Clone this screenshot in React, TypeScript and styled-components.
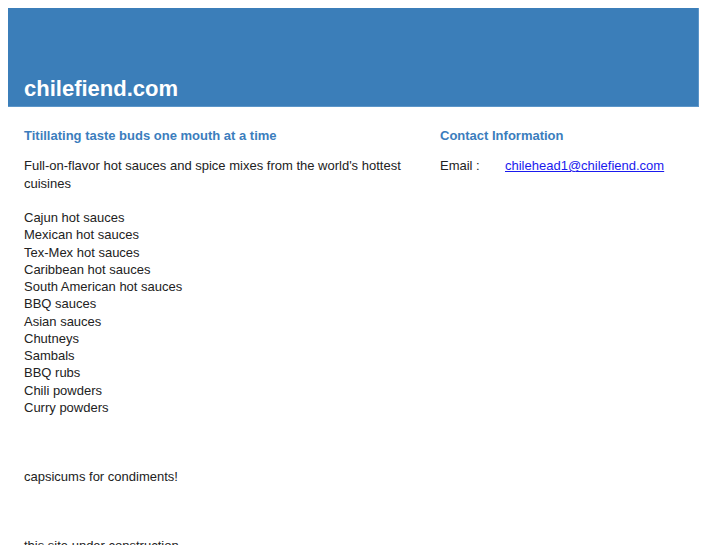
import React from "react"
import styled, { createGlobalStyle } from "styled-components"

const GlobalStyle = createGlobalStyle`
  body {
    margin: 8px;
    background: #ffffff;
    font-family: "Liberation Sans", Arial, sans-serif;
    color: #222222;
  }
`

const categories = [
  "Cajun hot sauces",
  "Mexican hot sauces",
  "Tex-Mex hot sauces",
  "Caribbean hot sauces",
  "South American hot sauces",
  "BBQ sauces",
  "Asian sauces",
  "Chutneys",
  "Sambals",
  "BBQ rubs",
  "Chili powders",
  "Curry powders",
]

export default function App() {
  return (
    <>
      <GlobalStyle />
      <Page>
        <Header>
          <SiteTitle>chilefiend.com</SiteTitle>
        </Header>
        <Content>
          <MainColumn>
            <SectionTitle>Titillating taste buds one mouth at a time</SectionTitle>
            <BodyText>
              Full-on-flavor hot sauces and spice mixes from the world's hottest cuisines
              <br />
              <br />
              {categories.map(item => (
                <React.Fragment key={item}>
                  {item}
                  <br />
                </React.Fragment>
              ))}
              <br />
              <br />
              <br />
              capsicums for condiments!
              <br />
              <br />
              <br />
              <br />
              this site under construction
            </BodyText>
          </MainColumn>
          <SideColumn>
            <SectionTitle>Contact Information</SectionTitle>
            <ContactRow>
              <ContactLabel>Email :</ContactLabel>
              <ContactLink href="mailto:chilehead1@chilefiend.com">chilehead1@chilefiend.com</ContactLink>
            </ContactRow>
          </SideColumn>
        </Content>
      </Page>
    </>
  )
}

const Page = styled.div`
  width: 691px;
`

const Header = styled.header`
  box-sizing: border-box;
  height: 99px;
  display: flex;
  align-items: flex-end;
  padding: 0 16px 5px;
  background: #3b7eb9;
  border-right: 1px solid #5c96c9;
  border-bottom: 1px solid #5c96c9;
`

const SiteTitle = styled.h1`
  margin: 0;
  font-size: 22px;
  line-height: 25px;
  font-weight: bold;
  color: #ffffff;
`

const Content = styled.div`
  display: grid;
  grid-template-columns: 400px 1fr;
  column-gap: 16px;
  padding: 20px 16px 0;
`

const MainColumn = styled.div`
  display: flex;
  flex-direction: column;
`

const SideColumn = styled.div`
  display: flex;
  flex-direction: column;
`

const SectionTitle = styled.h2`
  margin: 0 0 13px;
  font-size: 13px;
  line-height: 17.25px;
  font-weight: bold;
  color: #3b7dbd;
`

const BodyText = styled.p`
  margin: 0;
  font-size: 13px;
  line-height: 17.25px;
`

const ContactRow = styled.div`
  display: grid;
  grid-template-columns: 65px 1fr;
  font-size: 13px;
  line-height: 17.25px;
`

const ContactLabel = styled.span`
  color: #222222;
`

const ContactLink = styled.a`
  color: #1a1aee;
  text-decoration: underline;
`
